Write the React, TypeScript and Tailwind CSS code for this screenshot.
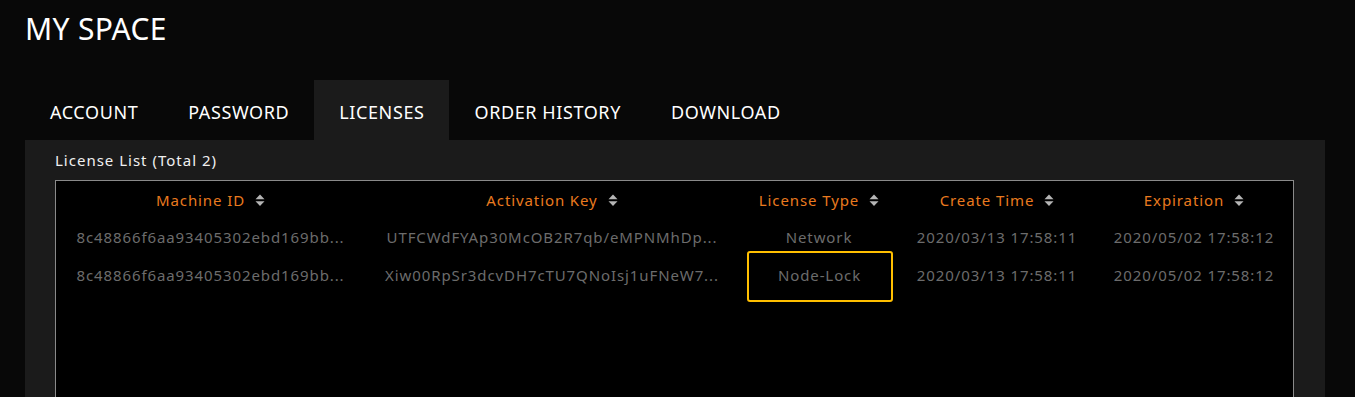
import React from "react";

const SortIcon = () => (
  <svg width="10" height="13" viewBox="0 0 10 13" className="inline-block ml-[10px] align-[-1px]">
    <path d="M5 0.5 L9.5 5.2 L0.5 5.2 Z" fill="#b5b5b5" />
    <path d="M0.5 7.3 L9.5 7.3 L5 12 Z" fill="#b5b5b5" />
  </svg>
);

const cols = [
  { label: "Machine ID", w: "w-[309px]" },
  { label: "Activation Key", w: "w-[374px]" },
  { label: "License Type", w: "w-[160px]" },
  { label: "Create Time", w: "w-[196px]" },
  { label: "Expiration", w: "w-[198px]" },
];

const rows = [
  ["8c48866f6aa93405302ebd169bb...", "UTFCWdFYAp30McOB2R7qb/eMPNMhDp...", "Network", "2020/03/13 17:58:11", "2020/05/02 17:58:12"],
  ["8c48866f6aa93405302ebd169bb...", "Xiw00RpSr3dcvDH7cTU7QNoIsj1uFNeW7...", "Node-Lock", "2020/03/13 17:58:11", "2020/05/02 17:58:12"],
];

export default function App() {
  const tabs = ["ACCOUNT", "PASSWORD", "LICENSES", "ORDER HISTORY", "DOWNLOAD"];
  return (
    <div className="w-[1355px] h-[397px] overflow-hidden bg-[#080808] text-white" style={{ fontFamily: '"Noto Sans", "Open Sans", sans-serif' }}>
      <h1 className="pl-[25px] pt-[11px] h-[80px] text-[30px] leading-[36px] font-normal tracking-[0.3px]">MY SPACE</h1>
      <div className="flex pl-[25px] h-[60px]">
        {tabs.map((t) => (
          <div
            key={t}
            className={`px-[25px] flex items-center text-[18px] tracking-[0.6px] pt-[4px] ${t === "LICENSES" ? "bg-[#1b1b1b]" : ""}`}
          >
            {t}
          </div>
        ))}
      </div>
      <div className="ml-[25px] w-[1300px] bg-[#1b1b1b] pl-[30px] pr-[31px] pt-[10px] h-[300px]">
        <div className="text-[15px] leading-[20px] text-[#f0f0f0] h-[30px] tracking-[1px]">License List (Total 2)</div>
        <div className="border border-[#8a8a8a] bg-black h-[300px] text-[15px] tracking-[0.9px]">
          <div className="flex h-[38px] items-center">
            {cols.map((c) => (
              <div key={c.label} className={`${c.w} text-center text-[#e97a1f] leading-[20px]`}>
                {c.label}
                <SortIcon />
              </div>
            ))}
          </div>
          {rows.map((r, i) => (
            <div key={i} className={`flex items-center ${i === 0 ? "h-[37px]" : "h-[38px]"}`}>
              {r.map((cell, j) => (
                <div key={j} className={`${cols[j].w} flex justify-center items-center text-[#6c6c6c] whitespace-nowrap`}>
                  {i === 1 && j === 2 ? (
                    <div className="shrink-0 w-[146px] h-[51px] mt-[2px] ml-[1px] border-2 border-[#ffbf00] rounded-[3px] flex items-center justify-center pb-[2px]">
                      {cell}
                    </div>
                  ) : (
                    cell
                  )}
                </div>
              ))}
            </div>
          ))}
        </div>
      </div>
    </div>
  );
}
